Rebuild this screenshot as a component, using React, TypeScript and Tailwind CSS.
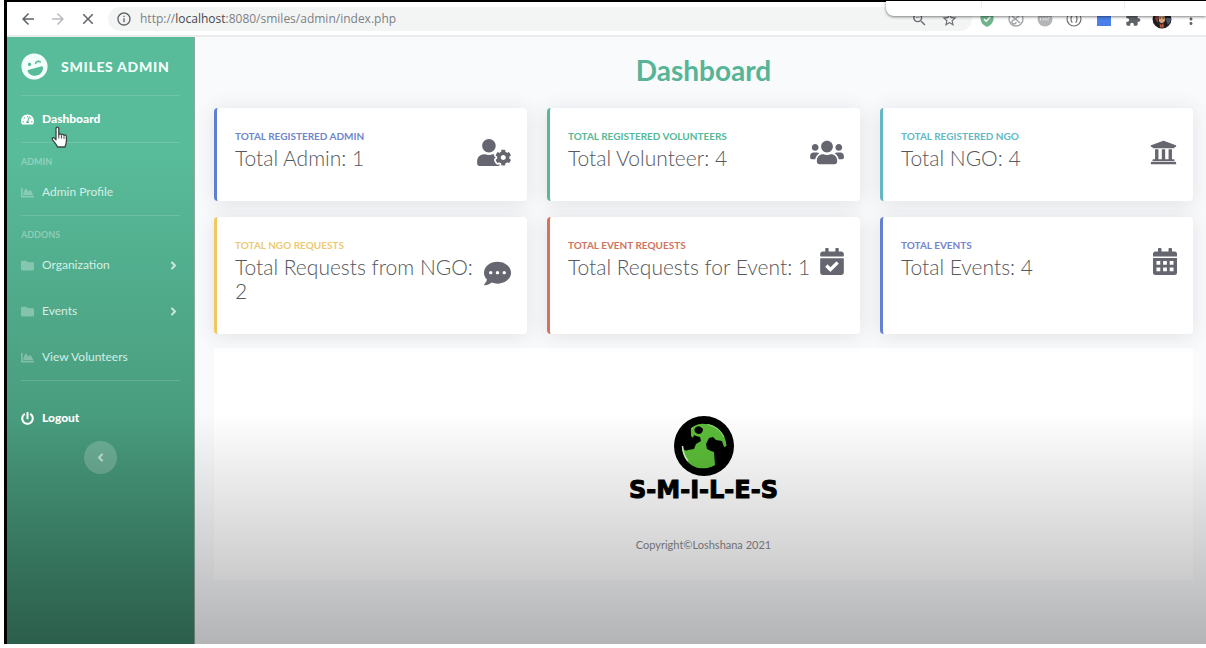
import type { ComponentType, ReactNode } from "react";
import type { IconType } from "react-icons";
import {
  FaAngleLeft,
  FaAngleRight,
  FaCalendarCheck,
  FaChartArea,
  FaCommentDots,
  FaFolder,
  FaLaughWink,
  FaPowerOff,
  FaTachometerAlt,
  FaUniversity,
  FaUserCog,
  FaUsers,
} from "react-icons/fa";
import {
  MdArrowBack,
  MdArrowForward,
  MdClose,
  MdExtension,
  MdInfoOutline,
  MdMoreVert,
  MdStarBorder,
  MdZoomOut,
} from "react-icons/md";

function CalendarGrid({ size = 27, className }: { size?: number; className?: string }) {
  return (
    <svg height={size} viewBox="0 0 24 27" className={className} fill="currentColor" aria-hidden="true">
      <path d="M5 1Q5 0 6 0h1.500q1 0 1 1v2.500h7V1q0-1 1-1H18q1 0 1 1v2.500h2.500Q24 3.500 24 6v2.500H0V6q0-2.500 2.500-2.500H5z" />
      <path
        fillRule="evenodd"
        d="M0 10h24v14.500q0 2.500-2.500 2.500h-19Q0 27 0 24.500zM3.500 13v3.800h3.800V13zM10.100 13v3.800h3.800V13zM16.700 13v3.800h3.800V13zM3.500 19.500v3.800h3.800v-3.800zM10.100 19.500v3.800h3.800v-3.800zM16.700 19.500v3.800h3.800v-3.800z"
      />
    </svg>
  );
}

type Stat = {
  label: string;
  value: string;
  icon: ComponentType<{ size?: number; className?: string }>;
  iconWidth: string;
  border: string;
  text: string;
};

const stats: Stat[] = [
  { label: "Total Registered Admin", value: "Total Admin: 1", icon: FaUserCog, iconWidth: "w-[34px]", border: "border-l-[#5f7fd0]", text: "text-[#6f86cb]" },
  { label: "Total Registered Volunteers", value: "Total Volunteer: 4", icon: FaUsers, iconWidth: "w-[34px]", border: "border-l-[#55b997]", text: "text-[#55b997]" },
  { label: "Total Registered NGO", value: "Total NGO: 4", icon: FaUniversity, iconWidth: "w-[27px]", border: "border-l-[#62b6c6]", text: "text-[#62b9c4]" },
  { label: "Total NGO Requests", value: "Total Requests from NGO: 2", icon: FaCommentDots, iconWidth: "w-[27px]", border: "border-l-[#efc95f]", text: "text-[#ecca74]" },
  { label: "Total Event Requests", value: "Total Requests for Event: 1", icon: FaCalendarCheck, iconWidth: "w-[24px]", border: "border-l-[#d8705a]", text: "text-[#cf7361]" },
  { label: "Total Events", value: "Total Events: 4", icon: CalendarGrid, iconWidth: "w-[24px]", border: "border-l-[#6480cf]", text: "text-[#7583cb]" },
];

function ToolButton({ label, children }: { label: string; children: ReactNode }) {
  return (
    <button type="button" aria-label={label} className="flex flex-1 items-center justify-center">
      {children}
    </button>
  );
}

function BrowserBar() {
  return (
    <header className="relative flex h-[37px] items-center border-t-2 border-b-2 border-t-black border-b-[#ebecee] bg-white pt-px text-[#5f6368]">
      <div className="flex w-[101px] items-center gap-3 pl-3">
        <button type="button" aria-label="Back"><MdArrowBack size={18} /></button>
        <button type="button" aria-label="Forward" className="text-[#b9bbbe]"><MdArrowForward size={18} /></button>
        <button type="button" aria-label="Stop loading"><MdClose size={18} /></button>
      </div>
      <div className="flex h-6 flex-1 items-center rounded-full bg-[#f3f5f5] pr-2 pl-2">
        <MdInfoOutline size={16} className="shrink-0" />
        <p className="flex-1 pl-2 font-['Open_Sans',sans-serif] text-[12px] text-[#7d8084]">
          http://<span className="text-[#45484d]">localhost</span>:8080/smiles/admin/index.php
        </p>
        <div className="flex w-[60px] text-[#6b6f73]">
          <ToolButton label="Zoom"><MdZoomOut size={17} /></ToolButton>
          <ToolButton label="Bookmark"><MdStarBorder size={17} /></ToolButton>
        </div>
      </div>
      <div className="flex w-[234px]">
        <ToolButton label="Shield">
          <svg width="14" height="16" viewBox="0 0 14 16">
            <path d="M7 0l6.5 2.5v5c0 4-3 7-6.500 8.500C3.500 14.500.5 11.500.5 7.500v-5z" fill="#6fb58c" />
            <path d="M4 8l2.200 2.200L10.300 6" fill="none" stroke="#fff" strokeWidth="1.500" />
          </svg>
        </ToolButton>
        <ToolButton label="Blocker">
          <svg width="16" height="16" viewBox="0 0 16 16" fill="none" stroke="#a3a5a7" strokeWidth="1.400">
            <circle cx="8" cy="8" r="7" />
            <path d="M4 5l8 7M12 4L6 9a2 2 0 1 0 2 2" />
          </svg>
        </ToolButton>
        <ToolButton label="Script tool">
          <svg width="16" height="16" viewBox="0 0 16 16">
            <circle cx="8" cy="8" r="7.500" fill="#b4b5b7" />
            <path d="M3.500 9.500v-3M6 9.500v-3l1.500 2L9 6.500v3M11 9.500v-3h2" stroke="#ececec" fill="none" />
          </svg>
        </ToolButton>
        <ToolButton label="Snippets">
          <svg width="16" height="16" viewBox="0 0 16 16" fill="none" stroke="#6b6e72" strokeWidth="1.200">
            <circle cx="8" cy="8" r="7" />
            <path d="M6.500 4.500C5 5 5 7 5 8s0 3 1.500 3.500M9.500 4.500C11 5 11 7 11 8s0 3-1.500 3.500" />
          </svg>
        </ToolButton>
        <ToolButton label="Blue extension">
          <span className="h-[14px] w-[14px] bg-[#4a80ea]" />
        </ToolButton>
        <ToolButton label="Extensions"><MdExtension size={16} /></ToolButton>
        <ToolButton label="Profile">
          <svg width="20" height="20" viewBox="0 0 20 20">
            <circle cx="10" cy="10" r="9.500" fill="#211d1f" />
            <path d="M13 9l6 0c0 3-1 5-3 7z" fill="#4a5568" />
            <path d="M6.500 6q3-3 6 0l.500 6q-3 4-6 .500z" fill="#d9a27b" />
            <path d="M4 4l2 3v7l-3-4z" fill="#8b3a2b" />
            <path d="M7.500 14l2 2 2-2 .500 4.500h-4z" fill="#b5533c" />
            <path d="M7.500 9h1.500M10.500 9h1.500" stroke="#2d1d18" />
          </svg>
        </ToolButton>
        <ToolButton label="Menu"><MdMoreVert size={18} /></ToolButton>
      </div>
      <div className="absolute -top-px right-0 flex h-[15px] w-80 rounded-bl-lg bg-white shadow-[0_1px_3px_rgba(0,0,0,0.5)]">
        <span className="h-2 w-24 border-r border-[#ededed]" />
        <span className="h-2 w-[143px] border-r border-[#ededed]" />
      </div>
    </header>
  );
}

function NavItem({
  icon: Icon,
  label,
  strong = false,
  expandable = false,
}: {
  icon: IconType;
  label: string;
  strong?: boolean;
  expandable?: boolean;
}) {
  return (
    <a
      href="#"
      className={
        strong
          ? "flex h-[46px] items-center gap-2 text-[12px] font-black text-white"
          : "flex h-[46px] items-center gap-2 text-[12px] text-[#d5eee5]"
      }
    >
      <Icon size={13} className={strong ? "w-[13px]" : "w-[13px] text-white/30"} />
      <span>{label}</span>
      {expandable && <FaAngleRight size={13} className="ml-auto text-white/70" />}
    </a>
  );
}

function Divider() {
  return <hr className="border-t border-white/15" />;
}

function NavHeading({ children }: { children: ReactNode }) {
  return <h2 className="pt-3 text-[9px] leading-[14px] font-bold text-white/35 uppercase">{children}</h2>;
}

function HandCursor() {
  return (
    <svg className="absolute top-[30px] left-[29px] h-6 w-5" viewBox="0 0 20 24" aria-hidden="true">
      <path
        d="M6 2.500c0-1.900 2.800-1.900 2.800 0v6.300c.3-1.300 2.500-1.200 2.600.2.500-1.100 2.500-.9 2.600.5.600-.9 2.400-.6 2.400 1v5c0 2-1 3-1.300 5.500H7.500c-.6-2.300-3-4.500-4.900-7.200-1.200-1.800.8-2.800 2-1.500L6 13.800z"
        fill="#fff"
        stroke="#3c4743"
        strokeWidth="1.300"
        strokeLinejoin="round"
      />
      <path d="M8.800 9v3.500M11.400 9.500v3M14 10.300v2.500" stroke="#3c4743" strokeWidth="1" />
    </svg>
  );
}

function Sidebar() {
  return (
    <nav className="w-[188px] shrink-0 border-r border-[#8fa99f] bg-linear-to-b from-[#58bb99] from-20% to-[#3c8368] px-[14px]">
      <a href="#" className="flex h-[58px] items-center gap-[13px] text-[#f3fffa]">
        <FaLaughWink size={27} className="-rotate-15" />
        <span className="text-[14px] font-black tracking-wider uppercase">Smiles Admin</span>
      </a>
      <Divider />
      <div className="relative">
        <NavItem icon={FaTachometerAlt} label="Dashboard" strong />
        <HandCursor />
      </div>
      <Divider />
      <NavHeading>Admin</NavHeading>
      <NavItem icon={FaChartArea} label="Admin Profile" />
      <Divider />
      <NavHeading>Addons</NavHeading>
      <NavItem icon={FaFolder} label="Organization" expandable />
      <NavItem icon={FaFolder} label="Events" expandable />
      <NavItem icon={FaChartArea} label="View Volunteers" />
      <Divider />
      <div className="pt-[14px]">
        <NavItem icon={FaPowerOff} label="Logout" strong />
      </div>
      <button
        type="button"
        aria-label="Collapse sidebar"
        className="mx-auto flex size-[33px] items-center justify-center rounded-full bg-white/20 text-white/60"
      >
        <FaAngleLeft size={13} />
      </button>
    </nav>
  );
}

function StatCard({ stat }: { stat: Stat }) {
  const Icon = stat.icon;
  return (
    <section
      className={`rounded-[4px] border-l-[3px] bg-white pt-[22px] pr-4 pb-[30px] pl-[18px] shadow-[0_2px_20px_rgba(58,59,69,0.13)] ${stat.border}`}
    >
      <div className="flex items-center justify-between gap-2">
        <div>
          <h2 className={`mb-1 text-[10px] leading-3 font-bold uppercase ${stat.text}`}>{stat.label}</h2>
          <p className="mb-px text-[21px] leading-6 font-light text-[#56575c]">{stat.value}</p>
        </div>
        <Icon size={27} className={`mt-1 shrink-0 text-[#65666f] ${stat.iconWidth}`} />
      </div>
    </section>
  );
}

function Globe() {
  return (
    <svg width="60" height="60" viewBox="0 0 60 60" aria-hidden="true">
      <circle cx="30" cy="30" r="30" fill="#000" />
      <path
        d="M17 16Q16 12 20 10Q26 7 31 8C43 8 52 18 52.500 30L50 31L48 25L42 24L39 21L35 22L32 28L33 33L37 35L40 36L41 49C33 54 20 54 13 45Q8 39 8 30Q10 36 14 34L20 33L22 28L27 25L26 21L22 20L20 19L19 22L17 20Z"
        fill="#5bbd38"
      />
      <path d="M21 12Q25 8 29 13Q29 18 24 18Q19 16 21 12Z" fill="#000" />
      <path d="M8.500 30Q9 39 14 45" fill="none" stroke="#d7efd0" strokeWidth="1.500" />
      <path d="M17 13L19 12M34 8.500Q45 11 50 21" fill="none" stroke="#a5dd91" strokeWidth="1" />
    </svg>
  );
}

export default function App() {
  return (
    <div className="flex min-h-screen flex-col bg-white pb-1 pl-1 font-['Lato',sans-serif]">
      <div className="relative flex flex-1 flex-col border-l-[3px] border-black">
        <BrowserBar />
        <div className="flex flex-1">
          <Sidebar />
          <main className="flex-1 bg-[#f9fafc] pr-[13px] pb-8 pl-[19px]">
            <h1 className="pt-[15px] text-center text-[28px] leading-9 font-bold text-[#55b596]">Dashboard</h1>
            <div className="mt-5 grid grid-cols-3 gap-x-5 gap-y-4">
              {stats.map((stat) => (
                <StatCard key={stat.label} stat={stat} />
              ))}
            </div>
            <footer className="mt-[14px] flex h-[232px] flex-col items-center bg-white pt-[68px]">
              <Globe />
              <p className="font-['DejaVu_Sans',sans-serif] text-[24px] leading-7 font-bold text-black [-webkit-text-stroke:1px_black]">
                S-M-I-L-E-S
              </p>
              <p className="mt-[33px] text-[11px] leading-4 text-[#85868b]">Copyright©Loshshana 2021</p>
            </footer>
          </main>
        </div>
        <div className="pointer-events-none absolute inset-x-0 bottom-0 h-[36%] bg-linear-to-b from-transparent to-black/28" />
      </div>
    </div>
  );
}
